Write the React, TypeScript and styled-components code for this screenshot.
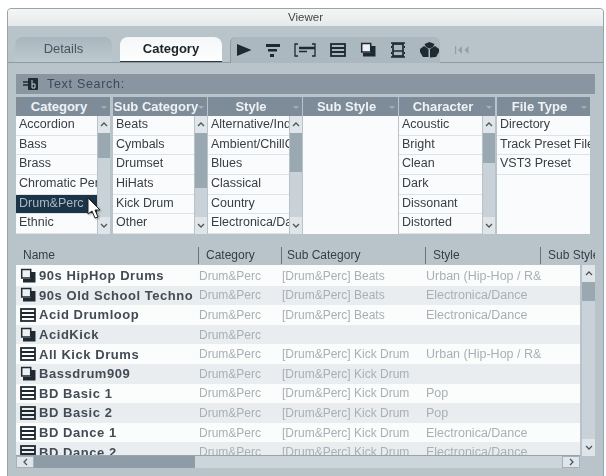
import React from 'react';
import styled, { createGlobalStyle } from 'styled-components';

const Global = createGlobalStyle`
  html, body { margin: 0; padding: 0; background: #fff; }
  body { width: 606px; height: 476px; overflow: hidden; font-family: "Liberation Sans", Arial, sans-serif; }
`;
const Page = styled.div`
  width: 606px; height: 476px; padding: 8px 2px 0 7px; box-sizing: border-box; filter: blur(0.55px);
`;
const Win = styled.div`
  height: 468px; background: #b9c4ca; border: 1px solid #9aa3a8; border-radius: 4px 4px 0 0; display: flex; flex-direction: column; overflow: hidden;
`;
const Title = styled.div`
  height: 17px; background: linear-gradient(#f4f6f6, #e6e9ea); text-align: center; font-size: 11.5px; line-height: 17px; color: #444; flex: none;
`;
const TabBar = styled.div`
  height: 25px; margin-top: 11px; padding-left: 7px; display: flex; align-items: stretch; border-bottom: 1px solid #8f9aa2; flex: none;
`;
const Tab = styled.div<{ $active?: boolean }>`
  width: ${p => (p.$active ? 102 : 97)}px; margin-right: 8px; border-radius: 8px 8px 0 0; text-align: center; line-height: 23px; font-size: 13px;
  background: ${p => (p.$active ? 'linear-gradient(#f4f7f8,#fdfefe)' : 'linear-gradient(#a8b6be,#bdc9cf)')};
  color: ${p => (p.$active ? '#1b2228' : '#4a5560')};
  font-weight: ${p => (p.$active ? 700 : 400)};
  border-bottom: ${p => (p.$active ? '1px solid #2e3640' : 'none')};
  box-sizing: border-box;
`;
const Tools = styled.div`
  width: 210px; margin-bottom: -1px; background: #abb8c0; border-radius: 6px 6px 0 0; display: flex; align-items: center; padding-left: 5px; gap: 14px; box-sizing: border-box; border-left: 1px solid #8f9aa2;
  svg { flex: none; }
`;
const Skip = styled.div`
  margin-left: 15px; display: flex; align-items: center;
`;
const Browser = styled.div`
  margin: 11px 0 0 8px; width: 579px; flex: none;
`;
const Search = styled.div`
  height: 20px; background: #8996a1; display: flex; align-items: center; padding-left: 7px; gap: 8px; font-size: 12.5px; color: #3d4955; letter-spacing: .7px;
`;
const Filters = styled.div`
  display: flex; margin-top: 3px; height: 137px;
`;
const Filter = styled.div<{ $w: number; $gap: number }>`
  width: ${p => p.$w}px; margin-right: ${p => p.$gap}px; flex: none; display: flex; flex-direction: column;
`;
const FilterHead = styled.div`
  height: 19px; background: #7e8c99; color: #eef2f5; font-size: 13px; font-weight: 700; line-height: 19px; text-align: center; padding-right: 8px; white-space: nowrap; position: relative;
  &::after { content: ''; position: absolute; right: 3px; top: 9px; border: 3px solid transparent; border-top-color: #a4afb8; }
`;
const FilterBody = styled.div`
  flex: 1; display: flex; background: #f9fbfc; min-height: 0;
`;
const Options = styled.div`
  flex: 1; min-width: 0; overflow: hidden;
`;
const Option = styled.div<{ $sel?: boolean }>`
  height: 19.7px; box-sizing: border-box; border-bottom: 1px solid #dde2e5; padding-left: 3px; font-size: 12.5px; line-height: 17px; white-space: nowrap; overflow: hidden;
  background: ${p => (p.$sel ? '#1c3448' : 'transparent')};
  color: ${p => (p.$sel ? '#a9b8c3' : '#383e44')};
`;
const VBar = styled.div`
  width: 13px; flex: none; background: #c8d2d8; display: flex; flex-direction: column; border-left: 1px solid #b8c2c8; box-sizing: border-box;
`;
const Arrow = styled.div`
  height: 17px; flex: none; background: #dfe5e8; display: flex; align-items: center; justify-content: center;
`;
const Thumb = styled.div<{ $h: number }>`
  height: ${p => p.$h}px; flex: none; background: #9aa8b2;
`;
const Gap = styled.div`
  flex: 1;
`;
const Columns = styled.div`
  display: grid; grid-template-columns: 182px 83px 144px 115px 55px; height: 18px; margin-top: 12px; align-items: center; overflow: hidden;
`;
const Col = styled.div<{ $pad: number; $first?: boolean }>`
  height: 17px; line-height: 17px; font-size: 12px; color: #353d46; white-space: nowrap; overflow: hidden; padding-left: ${p => p.$pad}px; border-left: ${p => (p.$first ? 'none' : '1px solid #68727b')};
`;
const ListArea = styled.div`
  display: flex; height: 203px; margin-top: 1px; width: 579px;
`;
const ListMain = styled.div`
  width: 564px; flex: none; display: flex; flex-direction: column;
`;
const Rows = styled.div`
  height: 191px; flex: none; overflow: hidden; background: #fbfcfc; padding-top: 1px; border-bottom: 1px solid #98a4ac; box-sizing: border-box;
`;
const Row = styled.div<{ $odd: boolean }>`
  height: 19.6px; display: grid; grid-template-columns: 183px 83px 144px 1fr; align-items: center;
  background: ${p => (p.$odd ? '#e9edf0' : '#fbfcfc')};
`;
const NameCell = styled.div`
  display: flex; align-items: center; gap: 3px; padding-left: 4px; font-size: 13px; font-weight: 700; color: #434b54; letter-spacing: .55px; white-space: nowrap; overflow: hidden;
`;
const Cell = styled.div<{ $wide?: boolean }>`
  font-size: ${p => (p.$wide ? 12.5 : 12)}px; color: #a9b0b5; white-space: nowrap; overflow: hidden;
`;
const HBar = styled.div`
  height: 12px; flex: none; display: flex; background: #ccd5da;
`;
const HArrow = styled.div`
  width: 18px; flex: none; background: #dfe5e8; border: 1px solid #a6b0b7; box-sizing: border-box; display: flex; align-items: center; justify-content: center;
`;
const HThumb = styled.div`
  width: 161px; background: #8e9ca7;
`;
const ListScroll = styled(VBar)`
  width: 14px; height: 191px; margin-left: 1px;
`;
const Cursor = styled.svg`
  position: absolute; left: 87px; top: 197px; filter: drop-shadow(1px 1px 1px #0005);
`;

const INK = '#1e2932';
const Play = () => <svg width="16" height="16" viewBox="0 0 16 16"><path d="M1 2 L15.5 8 L1 14z" fill={INK} /></svg>;
const Filt = () => <svg width="14" height="16" viewBox="0 0 14 16" fill={INK}><rect x="0" y="2" width="14" height="3" /><rect x="2" y="7" width="9" height="2.5" /><rect x="4" y="12" width="4" height="3" /></svg>;
const Ruler = () => <svg width="22" height="16" viewBox="0 0 22 16" fill="none" stroke={INK} strokeWidth="1.3"><path d="M4 2H1v12h3M18 2h3v12h-3" /><path d="M5 6h16" strokeWidth="2.4" /><path d="M5 9.5h8" strokeWidth="1.6" /></svg>;
const BoxIcon = () => <svg width="16" height="14" viewBox="0 0 16 14" fill="none" stroke={INK} strokeWidth="1.8"><rect x="1" y="1" width="14" height="12" /><path d="M1 5h14M1 9h14" /></svg>;
const Stack = () => <svg width="16" height="16" viewBox="0 0 16 16"><path d="M11 4h4.5v10.5H3V11h8z" fill={INK} /><rect x="1.7" y="1.500" width="9" height="8.500" fill="#eef1f3" stroke={INK} strokeWidth="1.500" /></svg>;
const Film = () => <svg width="16" height="18" viewBox="0 0 16 18" fill="none" stroke={INK} strokeWidth="1.7"><rect x="3" y="3" width="10" height="12" /><path d="M1 2h14M1 16h14M3 10h10" /><path d="M1.500 5v2M14.500 5v2M1.500 11v2M14.500 11v2" strokeWidth="1" /></svg>;
const Cubes = () => <svg width="19" height="16" viewBox="0 0 19 16" fill={INK}><path d="M9.500 0l5 2-1.500 3-3.500 1.500L6 5 4.500 2z" /><path d="M4 4l4.500 3v8L3 15 0 10V7z" /><path d="M15 4l4 3v3l-3 5-6 .5V7z" /></svg>;
const SearchIcon = () => <svg width="16" height="14" viewBox="0 0 16 14"><path d="M0 5h5M0 8h5" stroke={INK} strokeWidth="1.500" /><rect x="5" y="1" width="10" height="12" rx="1" fill={INK} /><path d="M9 3v8h3V7H9" fill="none" stroke="#c4ced4" strokeWidth="1" /></svg>;
const SkipIcon = () => <svg width="15" height="8" viewBox="0 0 15 8" fill="#93a0a9"><rect x="0" y="0" width="1.200" height="8" /><path d="M7 0v8L3 4zM13.500 0v8l-4-4z" /></svg>;
const Up = () => <svg width="8" height="5" viewBox="0 0 8 5" fill="none" stroke="#4d565e" strokeWidth="1.300"><path d="M1 4l3-3 3 3" /></svg>;
const Down = () => <svg width="8" height="5" viewBox="0 0 8 5" fill="none" stroke="#4d565e" strokeWidth="1.300"><path d="M1 1l3 3 3-3" /></svg>;
const Left = () => <svg width="5" height="8" viewBox="0 0 5 8" fill="none" stroke="#4d565e" strokeWidth="1.300"><path d="M4 1L1 4l3 3" /></svg>;
const Right = () => <svg width="5" height="8" viewBox="0 0 5 8" fill="none" stroke="#4d565e" strokeWidth="1.300"><path d="M1 1l3 3-3 3" /></svg>;

const filters: { head: string; w: number; gap: number; items: string[]; sel?: number; thumb?: number }[] = [
  { head: 'Category', w: 94, gap: 3, items: ['Accordion', 'Bass', 'Brass', 'Chromatic Perc', 'Drum&Perc', 'Ethnic'], sel: 4, thumb: 25 },
  { head: 'Sub Category', w: 94, gap: 1, items: ['Beats', 'Cymbals', 'Drumset', 'HiHats', 'Kick Drum', 'Other'], thumb: 55 },
  { head: 'Style', w: 94, gap: 1, items: ['Alternative/Indie', 'Ambient/ChillOut', 'Blues', 'Classical', 'Country', 'Electronica/Dance'], thumb: 39 },
  { head: 'Sub Style', w: 95, gap: 1, items: [] },
  { head: 'Character', w: 96, gap: 2, items: ['Acoustic', 'Bright', 'Clean', 'Dark', 'Dissonant', 'Distorted'], thumb: 30 },
  { head: 'File Type', w: 93, gap: 0, items: ['Directory', 'Track Preset File', 'VST3 Preset'] },
];

type Kind = 's' | 'b';
const sub = (s: string) => `[Drum&Perc] ${s}`;
const rows: { n: string; k: Kind; s: string; y: string }[] = [
  { n: '90s HipHop Drums', k: 's', s: sub('Beats'), y: 'Urban (Hip-Hop / R&' },
  { n: '90s Old School Techno', k: 's', s: sub('Beats'), y: 'Electronica/Dance' },
  { n: 'Acid Drumloop', k: 'b', s: sub('Beats'), y: 'Electronica/Dance' },
  { n: 'AcidKick', k: 's', s: '', y: '' },
  { n: 'All Kick Drums', k: 'b', s: sub('Kick Drum'), y: 'Urban (Hip-Hop / R&' },
  { n: 'Bassdrum909', k: 's', s: sub('Kick Drum'), y: '' },
  { n: 'BD Basic 1', k: 'b', s: sub('Kick Drum'), y: 'Pop' },
  { n: 'BD Basic 2', k: 'b', s: sub('Kick Drum'), y: 'Pop' },
  { n: 'BD Dance 1', k: 'b', s: sub('Kick Drum'), y: 'Electronica/Dance' },
  { n: 'BD Dance 2', k: 'b', s: sub('Kick Drum'), y: 'Electronica/Dance' },
];

export default function App() {
  return (
    <Page>
      <Global />
      <Win>
        <Title>Viewer</Title>
        <TabBar>
          <Tab>Details</Tab>
          <Tab $active>Category</Tab>
          <Tools>
            <Play /><Filt /><Ruler /><BoxIcon /><Stack /><Film /><Cubes />
          </Tools>
          <Skip><SkipIcon /></Skip>
        </TabBar>
        <Browser>
          <Search><SearchIcon />Text Search:</Search>
          <Filters>
            {filters.map(f => (
              <Filter key={f.head} $w={f.w} $gap={f.gap}>
                <FilterHead>{f.head}</FilterHead>
                <FilterBody>
                  <Options>
                    {f.items.map((it, i) => <Option key={it} $sel={i === f.sel}>{it}</Option>)}
                  </Options>
                  {f.thumb && (
                    <VBar><Arrow><Up /></Arrow><Thumb $h={f.thumb} /><Gap /><Arrow><Down /></Arrow></VBar>
                  )}
                </FilterBody>
              </Filter>
            ))}
          </Filters>
          <Columns>
            <Col $first $pad={7}>Name</Col><Col $pad={7}>Category</Col><Col $pad={5}>Sub Category</Col><Col $pad={7}>Style</Col><Col $pad={7}>Sub Style</Col>
          </Columns>
          <ListArea>
            <ListMain>
              <Rows>
                {rows.map((r, i) => (
                  <Row key={r.n} $odd={i % 2 === 1}>
                    <NameCell>{r.k === 's' ? <Stack /> : <BoxIcon />}{r.n}</NameCell>
                    <Cell>Drum&amp;Perc</Cell>
                    <Cell>{r.s}</Cell>
                    <Cell $wide>{r.y}</Cell>
                  </Row>
                ))}
              </Rows>
              <HBar><HArrow><Left /></HArrow><HThumb /><Gap /><HArrow><Right /></HArrow></HBar>
            </ListMain>
            <ListScroll><Arrow><Up /></Arrow><Thumb $h={19} /><Gap /><Arrow><Down /></Arrow></ListScroll>
          </ListArea>
        </Browser>
      </Win>
      <Cursor width="16" height="22" viewBox="0 0 16 22"><path d="M1 1v16l4-3 3 7 3-1-3-7h5z" fill="#fff" stroke="#222" strokeWidth="1" /></Cursor>
    </Page>
  );
}
